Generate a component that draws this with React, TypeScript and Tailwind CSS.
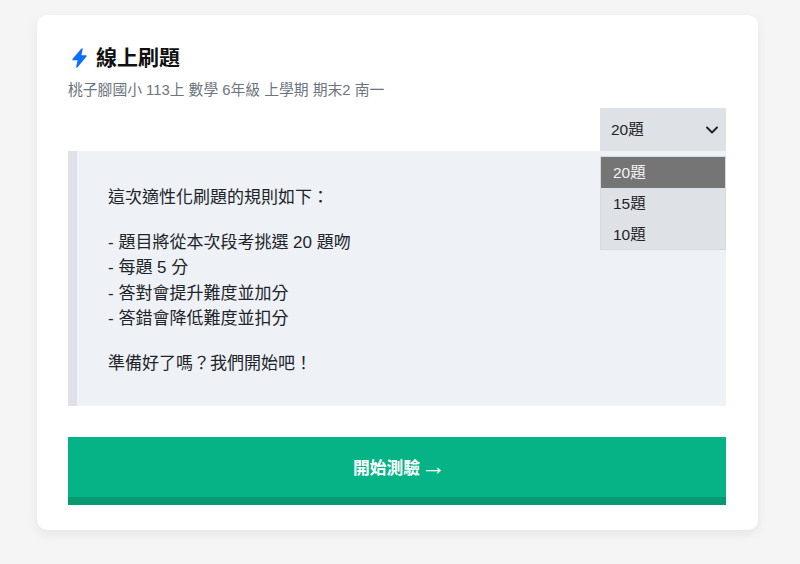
import React from "react";

const font = { fontFamily: '"Liberation Sans", "Noto Sans CJK TC", sans-serif' };

export default function App() {
  return (
    <div style={font} className="w-[800px] h-[564px] overflow-hidden bg-[#f5f5f5] pt-[15px] pl-[37px]">
      <div className="relative w-[721px] h-[515px] bg-white rounded-[10px] shadow-[0_4px_12px_rgba(0,0,0,0.07)] pl-[31px] pr-[32px] pt-[29px]">
        <div className="flex items-center h-[28px]">
          <svg className="ml-[4px] mr-[9px]" width="15" height="20" viewBox="0 0 15 20">
            <path d="M10 1 L1 11.5 L6.5 11.5 L4.8 19 L14 8 L8.5 8 Z" fill="#0d6efd" stroke="#0d6efd" strokeWidth="1.4" strokeLinejoin="round" />
          </svg>
          <h1 className="text-[21px] leading-[28px] font-bold text-[#111]">線上刷題</h1>
        </div>
        <p className="mt-[8px] text-[14.8px] leading-[20px] text-[#6c757d]">桃子腳國小 113上 數學 6年級 上學期 期末2 南一</p>

        <div className="flex justify-end mt-[8px]">
          <div className="w-[126px] h-[43px] bg-[#dee2e6] flex items-center justify-between pl-[11px] pr-[7px] text-[15.5px] text-[#212529]">
            <span>20題</span>
            <svg width="14" height="10" viewBox="0 0 14 10" fill="none" stroke="#212529" strokeWidth="2" strokeLinecap="round" strokeLinejoin="round">
              <path d="M2 2.5 L7 7.5 L12 2.5" />
            </svg>
          </div>
        </div>

        <div className="h-[255px] bg-[#eef1f6] border-l-[9px] border-[#dfe1ea] pl-[31px] pt-[34px] text-[17px] leading-[25.2px] text-[#212529]">
          <p>這次適性化刷題的規則如下：</p>
          <p className="mt-[20px]">- 題目將從本次段考挑選 20 題吻</p>
          <p>- 每題 5 分</p>
          <p>- 答對會提升難度並加分</p>
          <p>- 答錯會降低難度並扣分</p>
          <p className="mt-[20px]">準備好了嗎？我們開始吧！</p>
        </div>

        <button className="mt-[31px] w-full h-[68px] bg-[#06b386] border-b-[8px] border-[#059a74] text-white font-bold text-[16.8px] flex items-center justify-center gap-[1px] pl-[5px] pt-[4px]">
          <span>開始測驗</span>
          <span className="text-[25px] leading-[25px] font-normal -mt-[6px]">→</span>
        </button>

        <div className="absolute left-[563px] top-[141px] w-[126px] h-[94px] overflow-hidden bg-[#dee2e6] border border-[#d6d9de] text-[15.5px] text-[#212529]">
          <div className="h-[31px] bg-[#757575] text-[#f2f2f2] flex items-center pl-[12px] pt-[1px]">20題</div>
          <div className="h-[31px] flex items-center pl-[12px] pt-[1px]">15題</div>
          <div className="h-[31px] flex items-center pl-[12px] pt-[1px]">10題</div>
        </div>
      </div>
    </div>
  );
}
